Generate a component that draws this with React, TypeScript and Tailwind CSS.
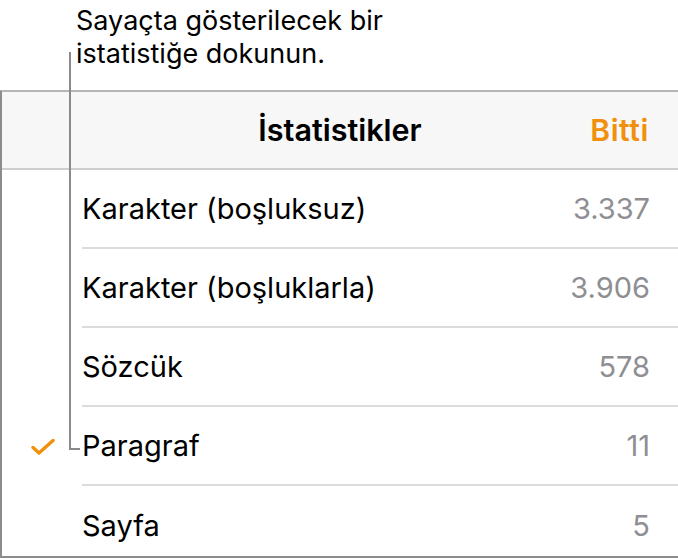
import React from 'react';

interface Stat {
  label: string;
  value: string;
  checked?: boolean;
}

const stats: Stat[] = [
  { label: 'Karakter (boşluksuz)', value: '3.337' },
  { label: 'Karakter (boşluklarla)', value: '3.906' },
  { label: 'Sözcük', value: '578' },
  { label: 'Paragraf', value: '11', checked: true },
  { label: 'Sayfa', value: '5' },
];

const Check = () => (
  <svg width="24" height="18" viewBox="0 0 24 18" fill="none">
    <polyline
      points="2,9.5 8,15 22,2.5"
      stroke="#f0900c"
      strokeWidth="3.4"
      strokeLinecap="round"
      strokeLinejoin="round"
    />
  </svg>
);

export default function App() {
  return (
    <div
      className="relative w-[678px] h-[559px] bg-white overflow-hidden"
      style={{ fontFamily: 'Inter, "Noto Sans", sans-serif' }}
    >
      {/* Callout */}
      <div className="pl-[76px] pt-[4px] h-[90px] text-[27px] leading-[33px] text-black">
        <p>Sayaçta gösterilecek bir</p>
        <p>istatistiğe dokunun.</p>
      </div>

      {/* Stats panel */}
      <div className="h-[468px] border-t-2 border-l-2 border-b-2 border-t-[#b5b5b5] border-l-[#8c8c8c] border-b-[#8c8c8c] overflow-hidden">
        <div className="h-[78px] bg-[#f7f7f7] border-b-2 border-[#cfcfcf] flex items-center justify-center relative">
          <span className="text-[30.5px] font-semibold text-black">İstatistikler</span>
          <span className="absolute right-[29px] text-[30px] font-semibold tracking-[0.6px] text-[#f0900c]">Bitti</span>
        </div>
        {stats.map((s, i) => (
          <div key={s.label} className="flex h-[79px]">
            <div className="w-[80px] flex items-center justify-center pl-[2px]">
              {s.checked && <Check />}
            </div>
            <div
              className={`flex-1 flex items-center justify-between pr-[28px] ${
                i < stats.length - 1 ? 'border-b-2 border-[#dcdcdc]' : ''
              }`}
            >
              <span className="text-[29px] text-black">{s.label}</span>
              <span className="text-[29px] text-[#8e8e93]">{s.value}</span>
            </div>
          </div>
        ))}
      </div>

      {/* Callout leader line */}
      <div className="absolute left-[69px] top-[52px] w-[2px] h-[398px] bg-[#8a8a8a]" />
      <div className="absolute left-[69px] top-[448px] w-[11px] h-[2px] bg-[#8a8a8a]" />
    </div>
  );
}
